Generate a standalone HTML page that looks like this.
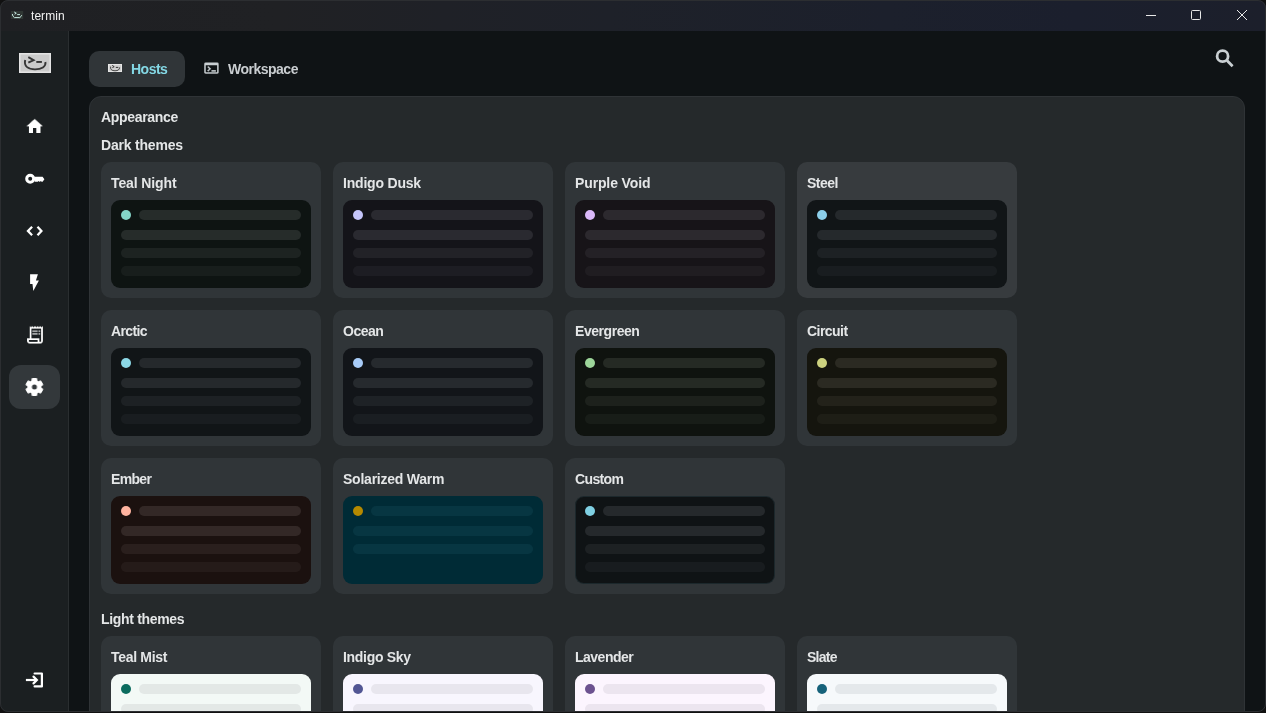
<!DOCTYPE html>
<html><head><meta charset="utf-8"><style>
*{box-sizing:border-box;margin:0;padding:0}
body *{will-change:transform}
html,body{width:1266px;height:713px;overflow:hidden;background:#111;font-family:"Liberation Sans",sans-serif}
#win{position:absolute;left:0;top:0;width:1266px;height:712px;border-radius:8px;overflow:hidden;background:#0f1315}
#wb{position:absolute;left:0;top:0;width:1266px;height:712px;border-radius:8px;border:1px solid #2c2e31;pointer-events:none}
#title{position:absolute;left:0;top:0;width:1266px;height:31px;background:linear-gradient(90deg,#1f2023 0%,#202124 22%,#1f2127 35%,#1e2129 48%,#1c202c 70%,#1b1f2d 85%,#1c1f2b 100%)}
#title .t{position:absolute;left:31px;top:9px;font-size:12px;color:#f2f2f2;letter-spacing:0.05px}
#side{position:absolute;left:0;top:31px;width:69px;height:682px;background:#1b1f21;border-right:1px solid #2a2e30}
#panel{position:absolute;left:89px;top:96px;width:1156px;height:640px;background:#25292b;border:1px solid #2f3336;border-radius:12px}
.h{position:absolute;font-size:14px;font-weight:700;color:#e4e6e7;white-space:nowrap}
.card{position:absolute;width:220px;height:136px;background:#303538;border-radius:10px}
.card .n{position:absolute;left:10px;top:13px;font-size:14px;font-weight:700;color:#e4e6e7;white-space:nowrap;line-height:16px}
.pv{position:absolute;left:10px;top:38px;width:200px;height:88px;border-radius:9px;overflow:hidden}
.pv i{position:absolute;display:block;border-radius:5px;height:10px}
.pv .d{left:10px;top:10px;width:10px}
.pv .b1{left:28px;top:10px;width:162px}
.pv .b2{left:10px;top:30px;width:180px}
.pv .b3{left:10px;top:48px;width:180px}
.pv .b4{left:10px;top:66px;width:180px}
.tab{position:absolute;top:51px;height:36px;border-radius:10px}
.tab .l{position:absolute;top:10px;font-size:14px;font-weight:700;white-space:nowrap;line-height:16px}
.ic{position:absolute}
</style></head><body>
<div id="win">
<div id="title">
<svg class="ic" style="left:0;top:0" width="30" height="30" viewBox="0 0 30 30"><rect x="10.8" y="10.9" width="12.4" height="8.1" fill="#2f3633"/><path d="M12.3 14 Q12.6 16.6 14.4 17.6 H19.8 Q21.2 16.6 21.7 15.2" stroke="#c8ece4" stroke-width="1" fill="none"/><path d="M14.2 12 L16.3 13.2 L14.6 14.2" stroke="#c8ece4" stroke-width="1" fill="none"/><path d="M17.2 14.6 H20" stroke="#c8ece4" stroke-width="1"/></svg>
<div class="t">termin</div>
<svg class="ic" style="left:1145px;top:9px" width="12" height="12" viewBox="0 0 12 12"><path d="M1 6.5 H11" stroke="#e8e8e8" stroke-width="1"/></svg>
<svg class="ic" style="left:1190px;top:9px" width="12" height="12" viewBox="0 0 12 12"><rect x="1.5" y="1.5" width="9" height="9" rx="1" stroke="#e8e8e8" stroke-width="1" fill="none"/></svg>
<svg class="ic" style="left:1236px;top:9px" width="12" height="12" viewBox="0 0 12 12"><path d="M1 1 L11 11 M11 1 L1 11" stroke="#e8e8e8" stroke-width="1"/></svg>
</div>
<div id="side"></div>
<div style="position:absolute;left:9px;top:365px;width:51px;height:44px;border-radius:12px;background:#33383b"></div>
<svg class="ic" style="left:0;top:0" width="69" height="713" viewBox="0 0 69 713">
<rect x="19" y="53" width="32" height="20" fill="#e4e4e4"/>
<rect x="20.5" y="54.5" width="29" height="17" fill="#cbcbcb"/>
<path d="M25.2 60 C23.6 66.5 28.5 69.4 35 69.4 C41.5 69.4 46.2 66.6 45.4 62" stroke="#363636" stroke-width="1.9" fill="none"/>
<path d="M28.3 57.2 L33.6 60.2 L28.3 62.6" stroke="#363636" stroke-width="1.9" fill="none"/>
<rect x="36.3" y="61" width="5.6" height="1.9" fill="#363636"/>
<g fill="#ffffff">
<path transform="translate(24.7 116.4) scale(0.83)" d="M10 20v-6h4v6h5v-8h3L12 3 2 12h3v8z"/>
<circle cx="30.2" cy="178.7" r="3.5" stroke="#fff" stroke-width="3" fill="none"/>
<path d="M34.6 176.8 H42.6 L44.4 179.3 L42.6 181.8 H41.6 L40.8 180.9 L40 181.8 H39.4 L38.6 180.9 L37.8 181.8 H34.6 Z"/>
<path d="M32.1 226.8 L28 231 L32.1 235.2 M37.5 226.8 L41.4 231 L37.5 235.2" stroke="#fff" stroke-width="2.3" fill="none" stroke-linejoin="miter"/>
<path d="M30.1 274.3 H37.9 L35.9 280.6 H38.9 L33.3 291 L32.5 283.9 H30.1 Z"/>
<path transform="translate(24.4 324.2) scale(0.88)" d="M19.5 3.5L18 2l-1.5 1.5L15 2l-1.5 1.5L12 2l-1.5 1.5L9 2 7.5 3.5 6 2v14H3v3c0 1.66 1.34 3 3 3h12c1.66 0 3-1.34 3-3V2l-1.5 1.5zM15 20H6c-.55 0-1-.45-1-1v-1h10v2zm4-1c0 .55-.45 1-1 1s-1-.45-1-1v-3H8V5h11v14z"/><path transform="translate(24.4 324.2) scale(0.88)" opacity="0.6" d="M9 7h6v2H9zM16 7h2v2h-2zM9 10h6v2H9zM16 10h2v2h-2z"/>
</g>
<g transform="translate(34.4 387)" fill="#fff">
<circle r="7"/>
<rect x="-2.9" y="-9" width="5.8" height="18" rx="1.2"/>
<rect x="-2.9" y="-9" width="5.8" height="18" rx="1.2" transform="rotate(60)"/>
<rect x="-2.9" y="-9" width="5.8" height="18" rx="1.2" transform="rotate(120)"/>
<circle r="2.5" fill="#33383b"/>
</g>
<g stroke="#fff" stroke-width="2.2" fill="none">
<path d="M25.9 680 H36.5"/>
<path d="M33.5 676.6 L36.9 680 L33.5 683.4" stroke-linecap="round"/>
<path d="M34.6 673.5 H41.9 V686.4 H34.6" stroke-linejoin="round" stroke-linecap="round"/>
</g>
</svg>
<div class="tab" style="left:89px;width:96px;background:#303538"><div class="l" style="left:42px;color:#84d8e5;letter-spacing:-0.5px">Hosts</div></div>
<div class="tab" style="left:195px;width:115px"><div class="l" style="left:33px;color:#c9cdd0;letter-spacing:-0.5px">Workspace</div></div>
<svg class="ic" style="left:0;top:0" width="1266" height="96" viewBox="0 0 1266 96">
<rect x="108" y="64" width="14" height="8" fill="#e6e6e6"/>
<rect x="109" y="65" width="12" height="6" fill="#d0d0d0"/>
<path d="M110.6 66.6 Q110 70.8 115 70.8 Q119.6 70.8 119.6 67.4" stroke="#333" stroke-width="0.9" fill="none"/>
<path d="M112.2 65.4 L114.2 66.7 L112.4 67.6" stroke="#333" stroke-width="1" fill="none"/>
<rect x="115.8" y="66.9" width="2.5" height="1" fill="#333"/>
<path transform="translate(202.8 59.7) scale(0.72 0.7)" fill="#c9cfd2" d="M20 4H4c-1.11 0-2 .9-2 2v12c0 1.1.89 2 2 2h16c1.1 0 2-.9 2-2V6c0-1.1-.9-2-2-2zm0 14H4V8h16v10zm-2-1h-6v-2h6v2zM7.5 17l-1.41-1.41L8.67 13l-2.59-2.59L7.5 9l4 4-4 4z"/>
<circle cx="1222.6" cy="56.2" r="5.5" stroke="#c9cfd2" stroke-width="2.8" fill="none"/>
<path d="M1227 60.6 L1232.6 66.2" stroke="#c9cfd2" stroke-width="2.8" stroke-linecap="butt"/>
</svg>
<div id="panel"></div>
<div class="h" style="left:101px;top:109px;letter-spacing:-0.33px">Appearance</div>
<div class="h" style="left:101px;top:137px;letter-spacing:-0.2px">Dark themes</div>
<div class="card" style="left:101px;top:162px"><div class="n" style="letter-spacing:-0.11px">Teal Night</div><div class="pv" style="background:#0e1412"><i class="d" style="background:#84d5c7"></i><i class="b1" style="background:#262c2a"></i><i class="b2" style="background:#262c2a"></i><i class="b3" style="background:#262c2a;opacity:.65"></i><i class="b4" style="background:#262c2a;opacity:.45"></i></div></div>
<div class="card" style="left:333px;top:162px"><div class="n" style="letter-spacing:-0.2px">Indigo Dusk</div><div class="pv" style="background:#141419"><i class="d" style="background:#c5c5fa"></i><i class="b1" style="background:#2a2a30"></i><i class="b2" style="background:#2a2a30"></i><i class="b3" style="background:#2a2a30;opacity:.65"></i><i class="b4" style="background:#2a2a30;opacity:.45"></i></div></div>
<div class="card" style="left:565px;top:162px"><div class="n" style="letter-spacing:-0.13px">Purple Void</div><div class="pv" style="background:#171418"><i class="d" style="background:#dab8f9"></i><i class="b1" style="background:#2c292e"></i><i class="b2" style="background:#2c292e"></i><i class="b3" style="background:#2c292e;opacity:.65"></i><i class="b4" style="background:#2c292e;opacity:.45"></i></div></div>
<div class="card" style="left:797px;top:162px;background:#373b3e"><div class="n" style="letter-spacing:-0.5px">Steel</div><div class="pv" style="background:#111517"><i class="d" style="background:#8ccfea"></i><i class="b1" style="background:#25292c"></i><i class="b2" style="background:#25292c"></i><i class="b3" style="background:#25292c;opacity:.65"></i><i class="b4" style="background:#25292c;opacity:.45"></i></div></div>
<div class="card" style="left:101px;top:310px"><div class="n" style="letter-spacing:-0.64px">Arctic</div><div class="pv" style="background:#111517"><i class="d" style="background:#8cd8e6"></i><i class="b1" style="background:#25292c"></i><i class="b2" style="background:#25292c"></i><i class="b3" style="background:#25292c;opacity:.65"></i><i class="b4" style="background:#25292c;opacity:.45"></i></div></div>
<div class="card" style="left:333px;top:310px"><div class="n" style="letter-spacing:-0.5px">Ocean</div><div class="pv" style="background:#121519"><i class="d" style="background:#a8ccf8"></i><i class="b1" style="background:#262a2e"></i><i class="b2" style="background:#262a2e"></i><i class="b3" style="background:#262a2e;opacity:.65"></i><i class="b4" style="background:#262a2e;opacity:.45"></i></div></div>
<div class="card" style="left:565px;top:310px"><div class="n" style="letter-spacing:-0.45px">Evergreen</div><div class="pv" style="background:#0f130f"><i class="d" style="background:#9dd69a"></i><i class="b1" style="background:#252a24"></i><i class="b2" style="background:#252a24"></i><i class="b3" style="background:#252a24;opacity:.65"></i><i class="b4" style="background:#252a24;opacity:.45"></i></div></div>
<div class="card" style="left:797px;top:310px"><div class="n" style="letter-spacing:-0.55px">Circuit</div><div class="pv" style="background:#15150e"><i class="d" style="background:#cdd27f"></i><i class="b1" style="background:#2b2a22"></i><i class="b2" style="background:#2b2a22"></i><i class="b3" style="background:#2b2a22;opacity:.65"></i><i class="b4" style="background:#2b2a22;opacity:.45"></i></div></div>
<div class="card" style="left:101px;top:458px"><div class="n" style="letter-spacing:-0.68px">Ember</div><div class="pv" style="background:#1b110f"><i class="d" style="background:#ffb4a0"></i><i class="b1" style="background:#332826"></i><i class="b2" style="background:#332826"></i><i class="b3" style="background:#332826;opacity:.65"></i><i class="b4" style="background:#332826;opacity:.45"></i></div></div>
<div class="card" style="left:333px;top:458px"><div class="n" style="letter-spacing:-0.23px">Solarized Warm</div><div class="pv" style="background:#002b36"><i class="d" style="background:#b58900"></i><i class="b1" style="background:#073642"></i><i class="b2" style="background:#073642"></i><i class="b3" style="background:#073642"></i></div></div>
<div class="card" style="left:565px;top:458px"><div class="n" style="letter-spacing:-0.64px">Custom</div><div class="pv" style="background:#0f1315"><i class="d" style="background:#7fd0e3"></i><i class="b1" style="background:#25292c"></i><i class="b2" style="background:#25292c"></i><i class="b3" style="background:#25292c;opacity:.65"></i><i class="b4" style="background:#25292c;opacity:.45"></i></div></div>
<div style="position:absolute;left:575px;top:496px;width:200px;height:88px;border-radius:9px;border:1px solid rgba(120,200,210,.12)"></div>
<div class="h" style="left:101px;top:611px;letter-spacing:-0.32px">Light themes</div>
<div class="card" style="left:101px;top:636px"><div class="n" style="letter-spacing:-0.3px">Teal Mist</div><div class="pv" style="background:#f3f9f6"><i class="d" style="background:#0b6b5e"></i><i class="b1" style="background:#e3e8e6"></i><i class="b2" style="background:#e3e8e6"></i><i class="b3" style="background:#e3e8e6;opacity:.65"></i><i class="b4" style="background:#e3e8e6;opacity:.45"></i></div></div>
<div class="card" style="left:333px;top:636px"><div class="n" style="letter-spacing:-0.3px">Indigo Sky</div><div class="pv" style="background:#f8f6fe"><i class="d" style="background:#525694"></i><i class="b1" style="background:#e8e6ee"></i><i class="b2" style="background:#e8e6ee"></i><i class="b3" style="background:#e8e6ee;opacity:.65"></i><i class="b4" style="background:#e8e6ee;opacity:.45"></i></div></div>
<div class="card" style="left:565px;top:636px"><div class="n" style="letter-spacing:-0.5px">Lavender</div><div class="pv" style="background:#fcf5fe"><i class="d" style="background:#6c528f"></i><i class="b1" style="background:#ece5ef"></i><i class="b2" style="background:#ece5ef"></i><i class="b3" style="background:#ece5ef;opacity:.65"></i><i class="b4" style="background:#ece5ef;opacity:.45"></i></div></div>
<div class="card" style="left:797px;top:636px"><div class="n" style="letter-spacing:-0.75px">Slate</div><div class="pv" style="background:#f6f9fb"><i class="d" style="background:#16627a"></i><i class="b1" style="background:#e4e8eb"></i><i class="b2" style="background:#e4e8eb"></i><i class="b3" style="background:#e4e8eb;opacity:.65"></i><i class="b4" style="background:#e4e8eb;opacity:.45"></i></div></div>
</div><div id="wb"></div>
</body></html>
